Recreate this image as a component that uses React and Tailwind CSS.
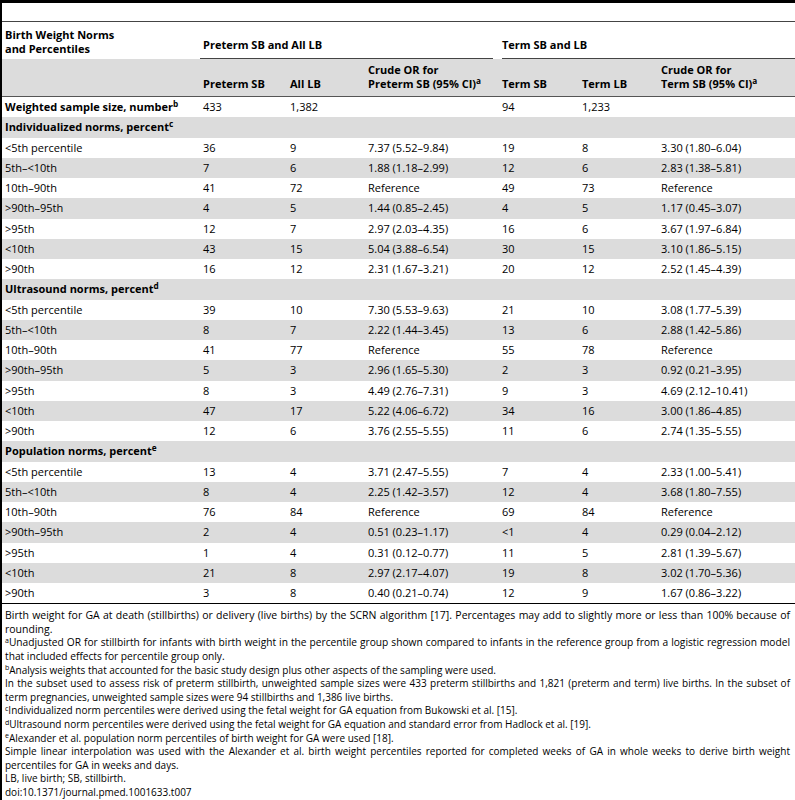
import React from "react";

const W = ["w-[198px]", "w-[87px]", "w-[78px]", "w-[134px]", "w-[80px]", "w-[79px]", "flex-1"];

const sections = [
  {
    title: "Individualized norms, percent",
    sup: "c",
    rows: [
      ["<5th percentile", "36", "9", "7.37 (5.52–9.84)", "19", "8", "3.30 (1.80–6.04)"],
      ["5th–<10th", "7", "6", "1.88 (1.18–2.99)", "12", "6", "2.83 (1.38–5.81)"],
      ["10th–90th", "41", "72", "Reference", "49", "73", "Reference"],
      [">90th–95th", "4", "5", "1.44 (0.85–2.45)", "4", "5", "1.17 (0.45–3.07)"],
      [">95th", "12", "7", "2.97 (2.03–4.35)", "16", "6", "3.67 (1.97–6.84)"],
      ["<10th", "43", "15", "5.04 (3.88–6.54)", "30", "15", "3.10 (1.86–5.15)"],
      [">90th", "16", "12", "2.31 (1.67–3.21)", "20", "12", "2.52 (1.45–4.39)"],
    ],
  },
  {
    title: "Ultrasound norms, percent",
    sup: "d",
    rows: [
      ["<5th percentile", "39", "10", "7.30 (5.53–9.63)", "21", "10", "3.08 (1.77–5.39)"],
      ["5th–<10th", "8", "7", "2.22 (1.44–3.45)", "13", "6", "2.88 (1.42–5.86)"],
      ["10th–90th", "41", "77", "Reference", "55", "78", "Reference"],
      [">90th–95th", "5", "3", "2.96 (1.65–5.30)", "2", "3", "0.92 (0.21–3.95)"],
      [">95th", "8", "3", "4.49 (2.76–7.31)", "9", "3", "4.69 (2.12–10.41)"],
      ["<10th", "47", "17", "5.22 (4.06–6.72)", "34", "16", "3.00 (1.86–4.85)"],
      [">90th", "12", "6", "3.76 (2.55–5.55)", "11", "6", "2.74 (1.35–5.55)"],
    ],
  },
  {
    title: "Population norms, percent",
    sup: "e",
    rows: [
      ["<5th percentile", "13", "4", "3.71 (2.47–5.55)", "7", "4", "2.33 (1.00–5.41)"],
      ["5th–<10th", "8", "4", "2.25 (1.42–3.57)", "12", "4", "3.68 (1.80–7.55)"],
      ["10th–90th", "76", "84", "Reference", "69", "84", "Reference"],
      [">90th–95th", "2", "4", "0.51 (0.23–1.17)", "<1", "4", "0.29 (0.04–2.12)"],
      [">95th", "1", "4", "0.31 (0.12–0.77)", "11", "5", "2.81 (1.39–5.67)"],
      ["<10th", "21", "8", "2.97 (2.17–4.07)", "19", "8", "3.02 (1.70–5.36)"],
      [">90th", "3", "8", "0.40 (0.21–0.74)", "12", "9", "1.67 (0.86–3.22)"],
    ],
  },
];

function DataRow({ cells, grey }) {
  return (
    <div className={grey ? "flex h-[20.25px] items-center bg-[#dcdcdc]" : "flex h-[20.25px] items-center"}>
      {cells.map((c, i) => (
        <div key={i} className={`${W[i]} pl-[3px] whitespace-nowrap`}>
          {c}
        </div>
      ))}
    </div>
  );
}

function SectionRow({ title, sup, grey }) {
  return (
    <div className={grey ? "flex h-[20.25px] items-center bg-[#dcdcdc]" : "flex h-[20.25px] items-center"}>
      <div className="pl-[3px] font-bold whitespace-nowrap">
        {title}
        <sup>{sup}</sup>
      </div>
    </div>
  );
}

function S({ children }) {
  return <sup className="text-[7px]">{children}</sup>;
}

export default function App() {
  let idx = 1;
  const body = [];
  body.push(
    <div key="w" className="flex h-[20.25px] items-center">
      <div className={`${W[0]} pl-[3px] font-bold whitespace-nowrap`}>
        Weighted sample size, number<sup>b</sup>
      </div>
      <div className={`${W[1]} pl-[3px]`}>433</div>
      <div className={`${W[2]} pl-[3px]`}>1,382</div>
      <div className={`${W[3]} pl-[3px]`}></div>
      <div className={`${W[4]} pl-[3px]`}>94</div>
      <div className={`${W[5]} pl-[3px]`}>1,233</div>
      <div className={`${W[6]} pl-[3px]`}></div>
    </div>
  );
  sections.forEach((s, si) => {
    idx++;
    body.push(<SectionRow key={"s" + si} title={s.title} sup={s.sup} grey={idx % 2 === 0} />);
    s.rows.forEach((r, ri) => {
      idx++;
      body.push(<DataRow key={"r" + si + "-" + ri} cells={r} grey={idx % 2 === 0} />);
    });
  });

  return (
    <div className="w-[795px] h-[800px] overflow-hidden border-l-2 border-black bg-white text-black font-['Open_Sans',sans-serif]">
      <div className="h-[3px] bg-black"></div>
      <div className="h-[18px]"></div>
      <div className="h-px bg-[#444]"></div>

      {/* Header row A */}
      <div className="flex h-[37px] text-[11px] leading-[14px] font-bold">
        <div className={`${W[0]} pl-[3px] pt-[6px]`}>
          Birth Weight Norms
          <br />
          and Percentiles
        </div>
        <div className="w-[299px] pr-[6px] flex">
          <div className="flex-1 border-b border-[#444] pl-[3px] pt-[16px]">Preterm SB and All LB</div>
        </div>
        <div className="flex-1 flex">
          <div className="flex-1 border-b border-[#444] ml-[3px] pt-[16px]">Term SB and LB</div>
        </div>
      </div>

      {/* Header row B */}
      <div className="flex h-[37px] items-end bg-[#dcdcdc] pb-[5px] text-[11px] leading-[14px] font-bold">
        <div className={`${W[0]} pl-[3px]`}></div>
        <div className={`${W[1]} pl-[3px]`}>Preterm SB</div>
        <div className={`${W[2]} pl-[3px]`}>All LB</div>
        <div className={`${W[3]} pl-[3px]`}>
          Crude OR for
          <br />
          Preterm SB (95% CI)<sup>a</sup>
        </div>
        <div className={`${W[4]} pl-[3px]`}>Term SB</div>
        <div className={`${W[5]} pl-[3px]`}>Term LB</div>
        <div className={`${W[6]} pl-[3px]`}>
          Crude OR for
          <br />
          Term SB (95% CI)<sup>a</sup>
        </div>
      </div>
      <div className="h-px bg-[#555]"></div>

      <div className="text-[11px] leading-[14px]">{body}</div>
      <div className="h-px bg-black"></div>

      <div className="pl-[3px] pr-[5px] pt-[5px] text-[10px] leading-[13.6px] text-justify">
        <p className="text-[10.5px]">
          Birth weight for GA at death (stillbirths) or delivery (live births) by the SCRN algorithm [17]. Percentages may
          add to slightly more or less than 100% because of rounding.
        </p>
        <p className="text-[10.2px]">
          <S>a</S>Unadjusted OR for stillbirth for infants with birth weight in the percentile group shown compared to
          infants in the reference group from a logistic regression model that included effects for percentile group only.
        </p>
        <p>
          <S>b</S>Analysis weights that accounted for the basic study design plus other aspects of the sampling were used.
        </p>
        <p>
          In the subset used to assess risk of preterm stillbirth, unweighted sample sizes were 433 preterm stillbirths and
          1,821 (preterm and term) live births. In the subset of term pregnancies, unweighted sample sizes were 94
          stillbirths and 1,386 live births.
        </p>
        <p>
          <S>c</S>Individualized norm percentiles were derived using the fetal weight for GA equation from Bukowski et al.
          [15].
        </p>
        <p>
          <S>d</S>Ultrasound norm percentiles were derived using the fetal weight for GA equation and standard error from
          Hadlock et al. [19].
        </p>
        <p>
          <S>e</S>Alexander et al. population norm percentiles of birth weight for GA were used [18].
        </p>
        <p>
          Simple linear interpolation was used with the Alexander et al. birth weight percentiles reported for completed
          weeks of GA in whole weeks to derive birth weight percentiles for GA in weeks and days.
        </p>
        <p>LB, live birth; SB, stillbirth.</p>
        <p>doi:10.1371/journal.pmed.1001633.t007</p>
      </div>
    </div>
  );
}
